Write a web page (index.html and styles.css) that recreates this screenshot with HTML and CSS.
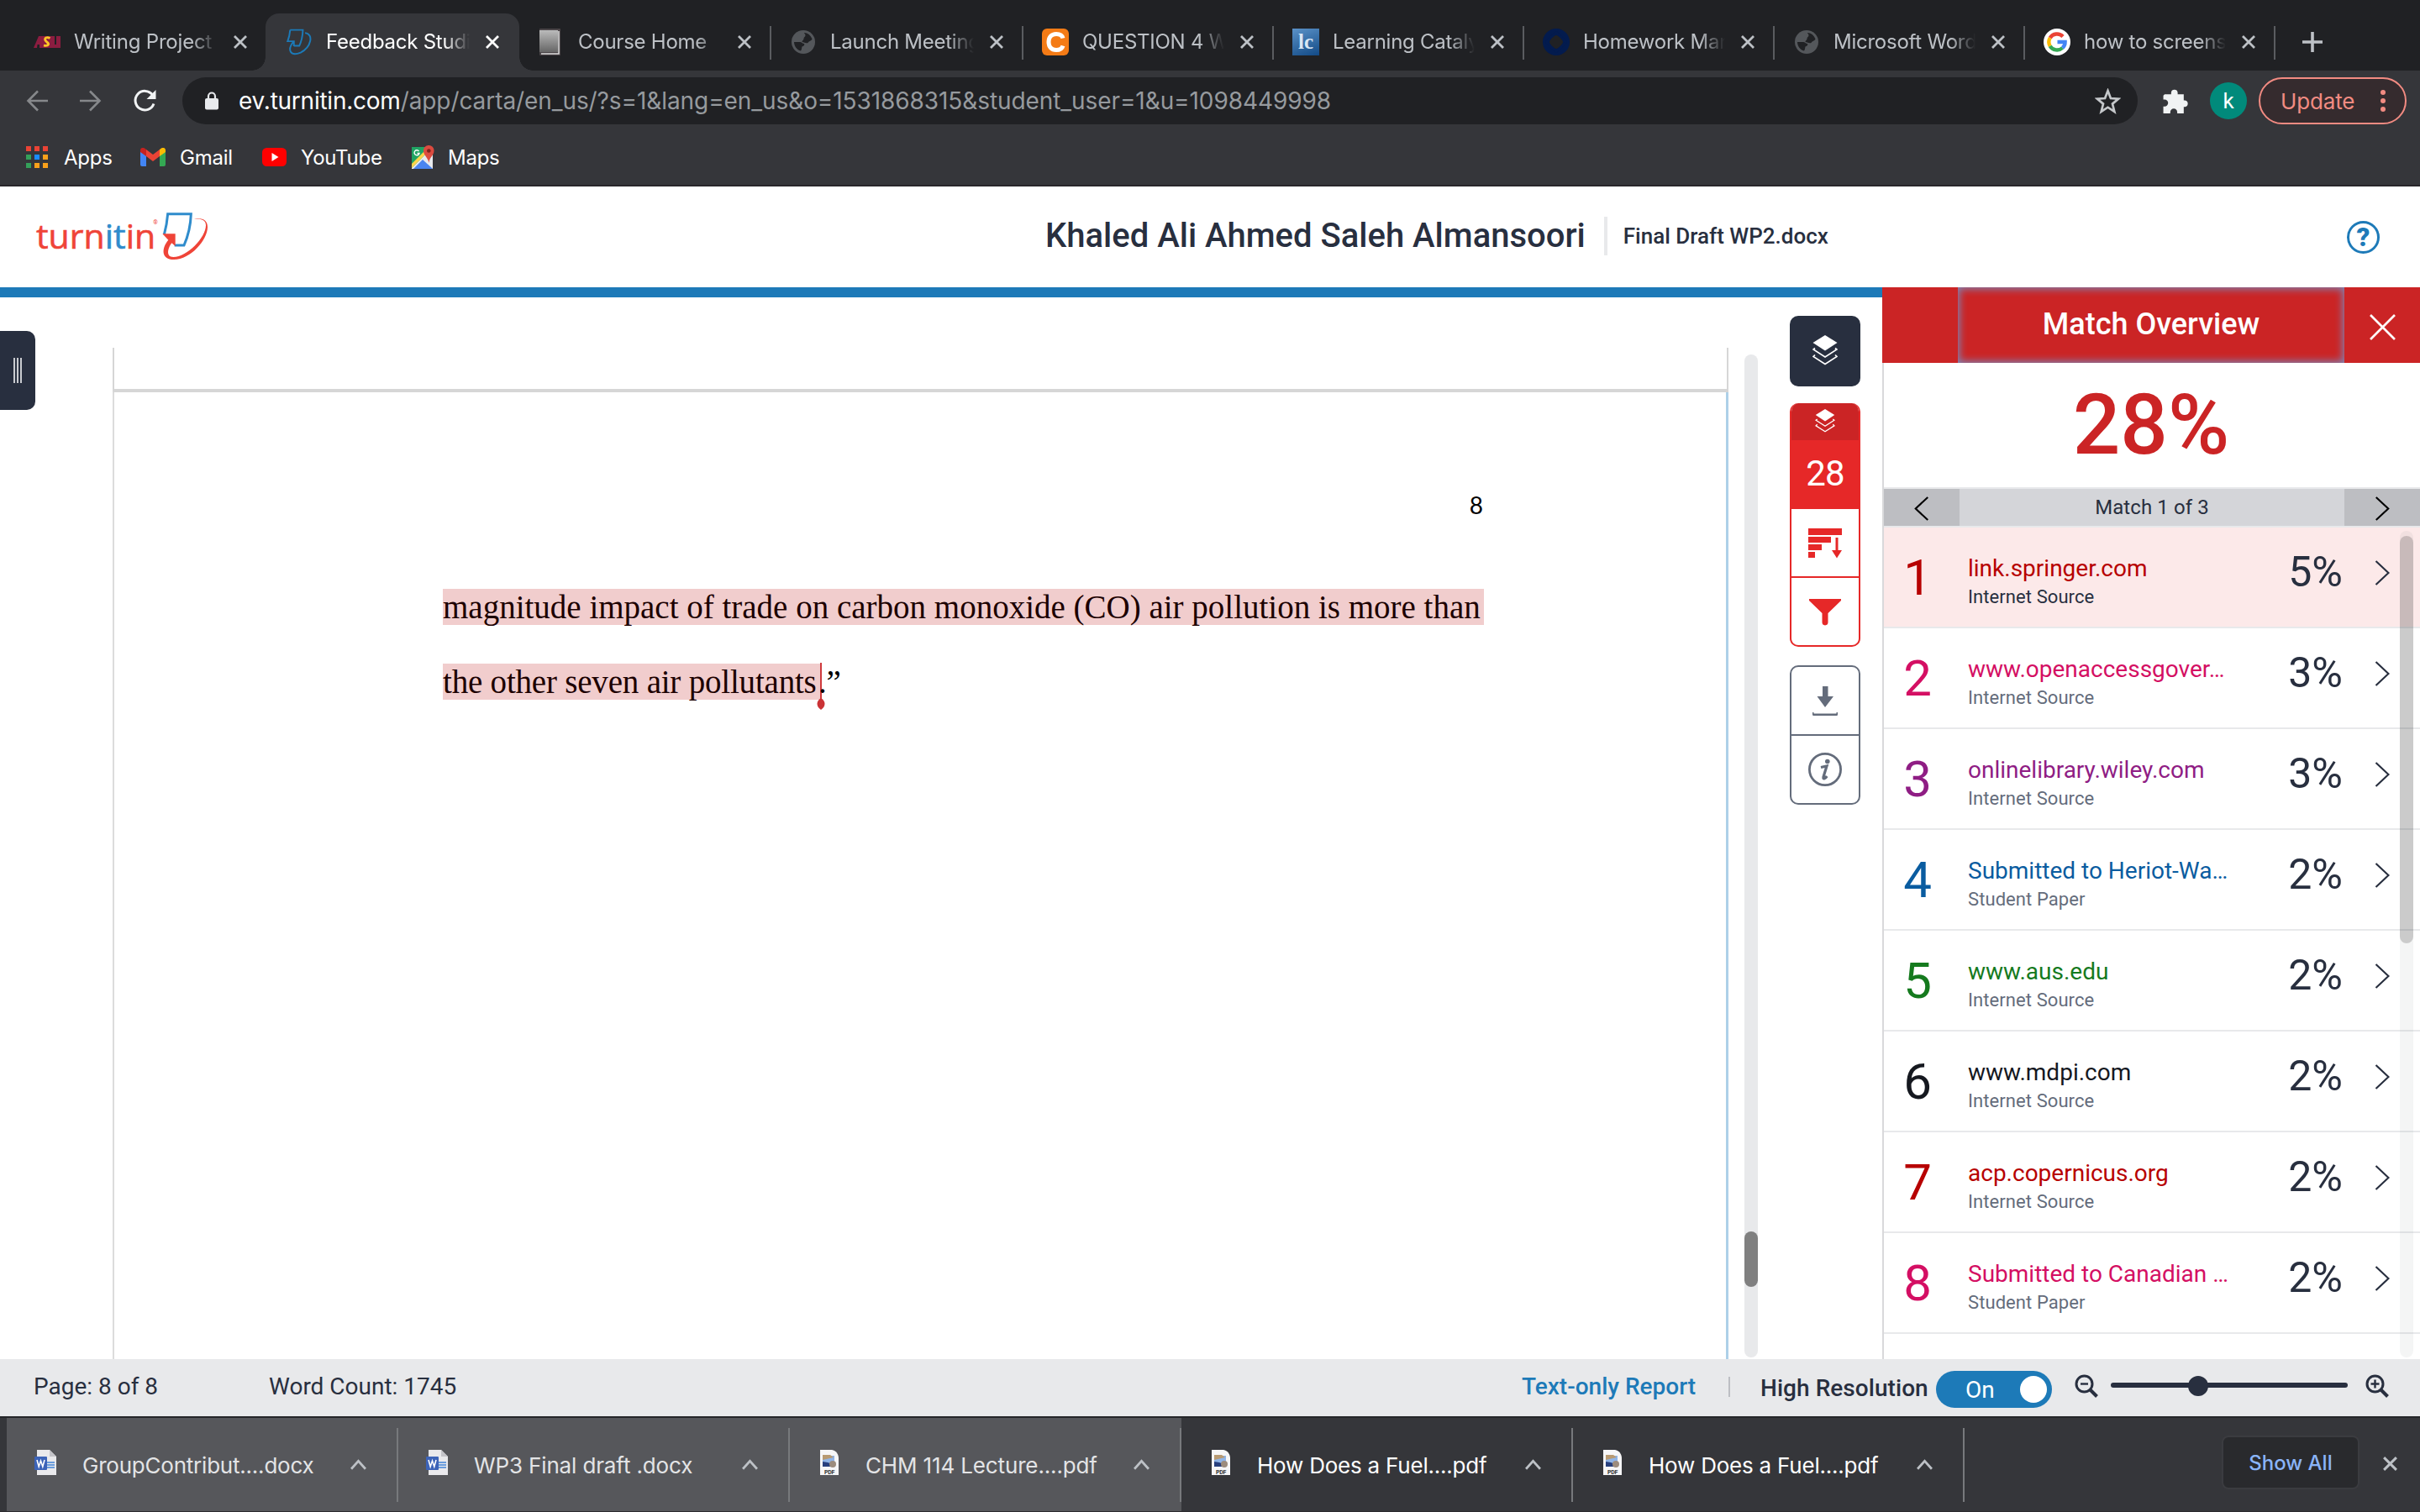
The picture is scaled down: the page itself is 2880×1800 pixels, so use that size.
FILE: index.html
```html
<!DOCTYPE html>
<html lang="en">
<head>
<meta charset="utf-8">
<title>Feedback Studio</title>
<link rel="stylesheet" href="styles.css">
</head>
<body>
<svg class="defs" aria-hidden="true">
  <symbol id="x" viewBox="0 0 18 18"><path d="M2 2L16 16M16 2L2 16" stroke="currentColor" stroke-width="2.8" fill="none"/></symbol>
  <symbol id="globe" viewBox="0 0 28 28"><circle cx="14" cy="14" r="14" fill="#54575b"/><path d="M15 3c4 0 8 3 9.500 7.500-1.500 3-4 2-5 4.500-3 1-4-1-7-1 0-2 2-2 2-4s2-2 2-4-1.500-1.500-1.500-3zM3 14h7c2 0 3 2 5 2 1 2-1 3-2.500 3.500-.5 2-.5 4-1.500 5C6.500 23.500 3 19 3 14z" fill="#202124"/></symbol>
  <symbol id="layers" viewBox="0 0 30 36"><path d="M15 0L29.500 9 15 18.500.5 9z" fill="#fff"/><path d="M3 15.500L1 17l14 9 14-9-2-1.500M3 23.500L1 25.500l14 9 14-9-2-2" fill="none" stroke="#fff" stroke-width="1.700"/></symbol>
  <symbol id="chev" viewBox="0 0 18 30"><path d="M1.500 1L16.500 15 1.500 29" fill="none" stroke="currentColor" stroke-width="2.200"/></symbol>
  <symbol id="up" viewBox="0 0 18 12"><path d="M1 11L9 2l8 9" fill="none" stroke="#bdc1c6" stroke-width="2.600"/></symbol>
  <symbol id="word" viewBox="0 0 28 32"><path d="M4 1h15l8 8v22H4z" fill="#e9e9ec"/><path d="M19 1l8 8h-8z" fill="#c4c4c9"/><path d="M16 16h9M16 19h9M16 22h9" stroke="#3f83d8" stroke-width="1.600"/><rect x="1" y="9" width="15" height="16" rx="1" fill="#3c63b8"/><path d="M4 13l2.200 8L8.500 14l2.300 7L13 13" fill="none" stroke="#fff" stroke-width="1.600"/></symbol>
  <symbol id="pdf" viewBox="0 0 28 32"><path d="M4 1h14c5 1 8 5 8 10v20H4z" fill="#f6f6f7"/><path d="M7 8h14v13H7z" fill="#8fb4e8"/><path d="M7 7h9l4 3-13 3z" fill="#b89a72"/><path d="M7 15l6 1 8 3v2H7z" fill="#273f7d"/><circle cx="19" cy="18" r="4" fill="#9c8c7d"/><text x="15" y="29.500" text-anchor="middle" class="pdf-label">PDF</text></symbol>
</svg>

<header class="tabs">
  <div class="tab wide"><svg class="fav" viewBox="0 0 32 32"><path d="M0 23L6 9h5v14H7v-4H4.500L4 23zM20 9h5v10h2V9h5v14H20z" fill="#8c1d40"/><path d="M9 23V9h12v14z" fill="#8c1d40"/><path d="M19.500 11.500c-4-2-7 0-5.500 2.500s4.500 3 3.500 5-3 1.500-5.500 1" fill="none" stroke="#ffc627" stroke-width="2.800"/></svg><span class="tt">Writing Project 2</span><svg class="tx"><use href="#x"/></svg></div>
  <div class="tab wide active"><svg class="fav" viewBox="480 30 180 190" preserveAspectRatio="none"><path d="M510 40h85q-2 62-24 112h-36M510 40q-3 40-17 80h42v35M610 60c60 10 40 100-30 140-70 30-90-20-50-75" fill="none" stroke="#1c7ab8" stroke-width="11"/></svg><span class="tt">Feedback Studio</span><svg class="tx"><use href="#x"/></svg></div>
  <div class="tab wide"><svg class="fav" viewBox="0 0 32 32"><defs><linearGradient id="g1" x1="0" y1="0" x2="0" y2="1"><stop offset="0" stop-color="#bbb"/><stop offset="1" stop-color="#666"/></linearGradient></defs><rect x="2" width="25" height="32" rx="1" fill="#4b4548"/><rect x="2" y="2" width="22" height="26" fill="url(#g1)"/><path d="M4 30h21V3" fill="none" stroke="#ddd" stroke-width="1.500"/></svg><span class="tt">Course Home</span><svg class="tx"><use href="#x"/></svg></div>
  <div class="tab wide sep"><svg class="fav globe"><use href="#globe"/></svg><span class="tt">Launch Meeting</span><svg class="tx"><use href="#x"/></svg></div>
  <div class="tab sep"><svg class="fav" viewBox="0 0 32 32"><rect width="32" height="32" rx="6" fill="#f47b16"/><path d="M25 11.500c-1-4-4-5-8-5-6 0-9 4-9 9.500s3 9.500 9 9.500c4 0 7-1.500 8-5" fill="none" stroke="#fff" stroke-width="5"/></svg><span class="tt">QUESTION 4 Wh</span><svg class="tx"><use href="#x"/></svg></div>
  <div class="tab sep"><span class="fav lc">lc</span><span class="tt">Learning Catalytics</span><svg class="tx"><use href="#x"/></svg></div>
  <div class="tab sep"><svg class="fav" viewBox="0 0 32 32"><circle cx="16" cy="16" r="12" fill="none" stroke="#031b4e" stroke-width="8"/><path d="M16 5l6 5 5 6-5 6-6 5-6-5-5-6 5-6z" fill="none" stroke="#031b4e" stroke-width="3"/></svg><span class="tt">Homework Manager</span><svg class="tx"><use href="#x"/></svg></div>
  <div class="tab sep"><svg class="fav globe"><use href="#globe"/></svg><span class="tt">Microsoft Word</span><svg class="tx"><use href="#x"/></svg></div>
  <div class="tab sep last"><svg class="fav" viewBox="0 0 32 32"><circle cx="16" cy="16" r="16" fill="#fff"/><g fill="none" stroke-width="4.400"><path d="M23 9.500A9.600 9.600 0 0 0 7.700 11.200" stroke="#ea4335"/><path d="M7.700 11.200a9.600 9.600 0 0 0 0 9.600" stroke="#fbbc05"/><path d="M7.700 20.800A9.600 9.600 0 0 0 22.500 23" stroke="#34a853"/><path d="M22.500 23A9 9 0 0 0 25.600 16H16.500" stroke="#4285f4"/></g></svg><span class="tt">how to screenshot</span><svg class="tx"><use href="#x"/></svg></div>
  <svg class="plus" viewBox="0 0 24 24"><path d="M12 0v24M0 12h24" stroke="#bdc1c6" stroke-width="3.600"/></svg>
</header>

<div class="toolbar">
  <svg class="nav" viewBox="0 0 26 26"><path d="M26 13H3M14 1.500L2.500 13 14 24.500" fill="none" stroke="#86888b" stroke-width="2.600"/></svg>
  <svg class="nav fwd" viewBox="0 0 26 26"><path d="M0 13h23M12 1.500L23.500 13 12 24.500" fill="none" stroke="#86888b" stroke-width="2.600"/></svg>
  <svg class="reload" viewBox="0 0 28 28"><path d="M23.500 7A11.300 11.300 0 1 0 25 17.500" fill="none" stroke="#f1f3f4" stroke-width="3"/><path d="M27.500 1v11h-11z" fill="#f1f3f4"/></svg>
  <div class="omni">
    <svg class="lock" viewBox="0 0 18 22"><path d="M5 9V5.500a4 4 0 0 1 8 0V9" fill="none" stroke="#e8eaed" stroke-width="2.200"/><rect x="1" y="8" width="16" height="13.500" rx="2" fill="#e8eaed"/></svg>
    <span class="host">ev.turnitin.com</span><span class="path">/app/carta/en_us/?s=1&amp;lang=en_us&amp;o=1531868315&amp;student_user=1&amp;u=1098449998</span>
    <svg class="star" viewBox="0 0 30 30"><path d="M15 3l3.300 8.600 9 .6-7 5.800 2.300 9L15 22l-7.600 5 2.300-9-7-5.800 9-.6z" fill="none" stroke="#c4c7ca" stroke-width="2.600"/></svg>
  </div>
  <svg class="puzzle" viewBox="0 0 30 30"><path d="M3 7h7.500V5a3.800 3.800 0 0 1 7.500 0v2h7v7h1.500a3.800 3.800 0 0 1 0 7.500H25V29h-7.500v-1.500a4 4 0 0 0-8 0V29H1.500v-8H3a4 4 0 0 0 0-8H1.500V8.500z" fill="#f1f3f4"/></svg>
  <span class="avatar">k</span>
  <div class="update"><span>Update</span><svg viewBox="0 0 6 28"><g fill="#f28b82"><circle cx="3" cy="4" r="3"/><circle cx="3" cy="14" r="3"/><circle cx="3" cy="24" r="3"/></g></svg></div>
</div>

<nav class="marks">
  <svg class="m-apps" viewBox="0 0 26 26"><path d="M0 0h6v6H0zM10 0h6v6h-6zM20 0h6v6h-6z" fill="#ea4335"/><path d="M0 10h6v6H0z" fill="#34a05a"/><path d="M10 10h6v6h-6z" fill="#1a8cff"/><path d="M20 10h6v6h-6zM10 20h6v6h-6zM20 20h6v6h-6z" fill="#f9a11b"/><path d="M0 20h6v6H0z" fill="#34a05a"/></svg><span class="t1">Apps</span>
  <svg class="m-gmail" viewBox="0 0 30 22"><path d="M0 3v17a2 2 0 0 0 2 2h5V8z" fill="#4285f4"/><path d="M30 3v17a2 2 0 0 1-2 2h-5V8z" fill="#34a853"/><path d="M23 2v8l7-5V3c0-3-3-4-5-2.500z" fill="#fbbc04"/><path d="M7 2v8L0 5V3C0 0 3-1 5 .5z" fill="#c5221f"/><path d="M7 2l8 6 8-6v8l-8 6-8-6z" fill="#ea4335"/></svg><span class="t2">Gmail</span>
  <svg class="m-yt" viewBox="0 0 29 22"><rect width="29" height="22" rx="5.500" fill="#f00"/><path d="M11.500 6l8 5-8 5z" fill="#fff"/></svg><span class="t3">YouTube</span>
  <svg class="m-maps" viewBox="0 0 28 30"><path d="M1 3h25v26H1z" fill="#e8eaed"/><path d="M1 3h17v8L1 28z" fill="#1fa463"/><path d="M18 11L1 28v-5l15-15z" fill="#ffd54b"/><path d="M3 29l11-11 12 11z" fill="#4a84f0"/><path d="M21 1a6 6 0 0 1 6.500 6.500C27.500 13 22 15 21.500 22 20 15 15 13 15 7.500A6 6 0 0 1 21 1z" fill="#dc4b3f"/><circle cx="21.300" cy="7.500" r="2.300" fill="#7d231c"/><path d="M9.500 8A3 3 0 1 0 10 10.500H7.500" fill="none" stroke="#fff" stroke-width="1.400"/></svg><span class="t4">Maps</span>
</nav>

<div class="head">
  <div class="logo"><span class="word">turn<b>it</b>in</span><sup>®</sup>
    <svg viewBox="480 30 180 180"><path d="M496 118q10-36 13-74h83q-2 60-25 112h-34" fill="none" stroke="#2f8ccc" stroke-width="9"/><path d="M490 115h46v44l-13-11c-14 18-22 50 6 50 50 0 116-70 116-113 0-16-10-24-42-24 34-4 48 8 48 30 0 46-60 116-120 116-48 0-44-42-20-70z" fill="#ef4438"/></svg>
  </div>
  <div class="who"><h1>Khaled Ali Ahmed Saleh Almansoori</h1><i></i><h2>Final Draft WP2.docx</h2></div>
  <div class="help">?</div>
</div>

<main>
  <section class="viewer">
    <div class="drawer"><i></i><i></i><i></i></div>
    <div class="sheets">
      <div class="prev"></div>
      <article class="page">
        <div class="num">8</div>
        <p><mark class="l1">magnitude impact of trade on carbon monoxide (CO) air pollution is more than</mark></p>
        <p class="p2"><mark class="l2">the other seven air pollutants<svg class="caret" viewBox="0 0 10 56"><path d="M5 0v46" stroke="#cf3a3d" stroke-width="2"/><path d="M5 42c3 2 4.500 4 4.500 7S7.500 54 5 56C2.500 54 .5 52 .5 49S2 44 5 42z" fill="#cb3336"/></svg></mark><span class="tail">.”</span></p>
      </article>
    </div>
    <div class="vbar"><i></i></div>
    <aside class="rail">
      <div class="dark"><svg><use href="#layers"/></svg></div>
      <div class="red">
        <div class="r0"><svg><use href="#layers"/></svg></div>
        <div class="r1">28</div>
        <div class="r2"><svg viewBox="0 0 40 36"><path d="M0 0h40v8H0zM0 10h27v7H0zM0 19h16v7H0zM0 28h8v7H0zM32.500 11h3v15H40l-6 9.500L28 26h4.500z" fill="#e62828"/></svg></div>
        <div class="r3"><svg viewBox="0 0 40 32"><path d="M1 0h38v2L23.500 17v11q0 3-3.500 3.500-3.500-.5-3.500-3.500V17L1 2z" fill="#e62828"/></svg></div>
      </div>
      <div class="gray">
        <div class="g1"><svg viewBox="0 0 30 36"><path d="M12 0h6.500v12H25L15 25 5.500 12H12zM0 31v3q0 1 1.500 1h27q1.500 0 1.500-1v-3h-1.500v1.500h-27V31z" fill="#646c7b"/></svg></div>
        <div class="g2"><svg viewBox="0 0 40 40"><circle cx="20" cy="20" r="18.600" fill="none" stroke="#646c7b" stroke-width="2.800"/><circle cx="22.800" cy="10.500" r="2.800" fill="#646c7b"/><path d="M15 17.500l7-1.500-4 13q-.5 2.500 1.200 1.700t3-2.700" fill="none" stroke="#646c7b" stroke-width="3.200"/></svg></div>
      </div>
    </aside>
  </section>

  <section class="panel">
    <div class="ptitle"><i></i><h3>Match Overview</h3><div><svg viewBox="0 0 30 30"><path d="M1 1l28 28M29 1L1 29" stroke="#fff" stroke-width="2.600"/></svg></div></div>
    <div class="results">
      <div class="score">28%</div>
      <div class="pager"><div><svg class="flip"><use href="#chev"/></svg></div><span>Match 1 of 3</span><div><svg><use href="#chev"/></svg></div></div>
      <ol>
        <li class="sel red1"><b>1</b><div><h4>link.springer.com</h4><small>Internet Source</small></div><em>5%</em><svg><use href="#chev"/></svg></li>
        <li class="pink"><b>2</b><div><h4>www.openaccessgover…</h4><small>Internet Source</small></div><em>3%</em><svg><use href="#chev"/></svg></li>
        <li class="purple"><b>3</b><div><h4>onlinelibrary.wiley.com</h4><small>Internet Source</small></div><em>3%</em><svg><use href="#chev"/></svg></li>
        <li class="blue"><b>4</b><div><h4>Submitted to Heriot-Wa…</h4><small>Student Paper</small></div><em>2%</em><svg><use href="#chev"/></svg></li>
        <li class="green"><b>5</b><div><h4>www.aus.edu</h4><small>Internet Source</small></div><em>2%</em><svg><use href="#chev"/></svg></li>
        <li class="black"><b>6</b><div><h4>www.mdpi.com</h4><small>Internet Source</small></div><em>2%</em><svg><use href="#chev"/></svg></li>
        <li class="red1"><b>7</b><div><h4>acp.copernicus.org</h4><small>Internet Source</small></div><em>2%</em><svg><use href="#chev"/></svg></li>
        <li class="pink"><b>8</b><div><h4>Submitted to Canadian …</h4><small>Student Paper</small></div><em>2%</em><svg><use href="#chev"/></svg></li>
      </ol>
    </div>
    <div class="pbar"><i></i></div>
  </section>
</main>

<div class="status">
  <span class="s1">Page: 8 of 8</span><span class="s2">Word Count: 1745</span>
  <a>Text-only Report</a><i class="div"></i><strong>High Resolution</strong>
  <div class="toggle"><span>On</span><i></i></div>
  <svg class="zo" viewBox="0 0 28 28"><circle cx="11.500" cy="11.500" r="9.500" fill="none" stroke="#282f3f" stroke-width="3"/><path d="M18 18l8.500 8.500" stroke="#282f3f" stroke-width="4"/><path d="M7 11.500h9" stroke="#282f3f" stroke-width="2.400"/></svg>
  <div class="slider"><i></i></div>
  <svg class="zi" viewBox="0 0 28 28"><circle cx="11.500" cy="11.500" r="9.500" fill="none" stroke="#282f3f" stroke-width="3"/><path d="M18 18l8.500 8.500" stroke="#282f3f" stroke-width="4"/><path d="M6.500 11.500h10M11.500 6.500v10" stroke="#282f3f" stroke-width="2.400"/></svg>
</div>

<footer class="shelf">
  <div class="dl lit"><svg class="doc"><use href="#word"/></svg><span>GroupContribut....docx</span><svg class="up"><use href="#up"/></svg></div>
  <div class="dl lit"><svg class="doc"><use href="#word"/></svg><span class="w">WP3 Final draft .docx</span><svg class="up"><use href="#up"/></svg></div>
  <div class="dl lit"><svg class="doc"><use href="#pdf"/></svg><span class="w">CHM 114 Lecture....pdf</span><svg class="up"><use href="#up"/></svg></div>
  <div class="dl"><svg class="doc"><use href="#pdf"/></svg><span>How Does a Fuel....pdf</span><svg class="up"><use href="#up"/></svg></div>
  <div class="dl"><svg class="doc"><use href="#pdf"/></svg><span>How Does a Fuel....pdf</span><svg class="up"><use href="#up"/></svg></div>
  <button>Show All</button>
  <svg class="sx"><use href="#x"/></svg>
</footer>
</body>
</html>
```
FILE: styles.css
```css
* { box-sizing: border-box; }
body { margin: 0; width: 2880px; height: 1800px; overflow: hidden; background: #fff; font-family: Roboto, sans-serif; color: #282f3f; }
svg { display: block; flex: none; }
i { display: block; }
h1, h2, h3, h4, p, ol { margin: 0; padding: 0; font-weight: 500; }
.defs { position: absolute; width: 0; height: 0; }
.pdf-label { font: 700 7px Roboto, sans-serif; fill: #333; }

/* tab strip */
.tabs { height: 84px; padding: 16px 0 0 16px; background: #202124; display: flex; font-family: Inter, sans-serif; }
.tab { position: relative; width: 298px; height: 68px; padding: 0 21px 0 24px; display: flex; align-items: center; color: #bdc1c6; }
.tab.wide { width: 300px; }
.tab.active { width: 302px; padding-right: 23px; margin-right: -2px; background: #35363a; border-radius: 16px 16px 0 0; color: #fff; }
.tab.active::before, .tab.active::after { content: ""; position: absolute; bottom: 0; width: 16px; height: 16px; }
.tab.active::before { left: -16px; background: radial-gradient(circle at 0 0, transparent 15.5px, #35363a 16px); }
.tab.active::after { right: -16px; background: radial-gradient(circle at 100% 0, transparent 15.5px, #35363a 16px); }
.sep::before, .last::after { content: ""; position: absolute; left: 0; top: 15px; width: 2px; height: 40px; background: #5a5c60; }
.last::after { left: auto; right: -2px; }
.fav { width: 32px; height: 32px; flex: none; }
.fav.globe { width: 28px; height: 28px; margin: 0 2px; }
.lc { background: linear-gradient(160deg, #5b92c8, #124a86); color: #d8e6f4; font: 700 25px/32px "Liberation Serif", serif; text-align: center; }
.tt { flex: 1; margin: 0 18px 0 16px; font-size: 24px; letter-spacing: -.25px; line-height: 32px; white-space: nowrap; overflow: hidden; -webkit-mask-image: linear-gradient(90deg, #000 82%, transparent 100%); mask-image: linear-gradient(90deg, #000 82%, transparent 100%); }
.tab:nth-child(1) .tt { letter-spacing: -.2px; }
.tx { width: 18px; height: 18px; }
.plus { width: 24px; height: 24px; margin: 22px 0 0 34px; }

/* toolbar */
.toolbar { height: 72px; background: #35363a; display: flex; align-items: center; padding-left: 31px; font-family: Inter, sans-serif; }
.nav { width: 26px; height: 26px; }
.fwd { margin-left: 38px; }
.reload { width: 28px; height: 28px; margin-left: 37px; }
.omni { width: 2327px; height: 56px; margin-left: 31px; padding: 0 20px 0 26px; border-radius: 28px; background: #202124; display: flex; align-items: center; font-size: 28px; white-space: nowrap; color: #fff; }
.lock { width: 18px; height: 22px; margin-right: 23px; }
.host { letter-spacing: -.24px; }
.path { color: #969a9e; letter-spacing: -.08px; }
.star { width: 31px; height: 31px; margin-left: auto; }
.puzzle { width: 31px; height: 31px; margin-left: 29px; }
.avatar { width: 44px; height: 44px; margin: 0 14px 0 26px; border-radius: 50%; background: #018a7b; color: #fff; font: 26px/44px Roboto, sans-serif; text-align: center; }
.update { width: 176px; height: 56px; border: 2px solid #f28b82; border-radius: 28px; background: #352b2e; color: #f28b82; display: flex; align-items: center; padding-left: 24px; font-size: 26px; letter-spacing: -.15px; }
.update svg { width: 6px; height: 28px; margin-left: 31px; }

/* bookmarks */
.marks { height: 66px; background: #35363a; border-bottom: 2px solid #28262a; display: flex; align-items: center; padding: 0 0 2px 31px; color: #fff; font: 24px Inter, sans-serif; letter-spacing: -.25px; }
.marks span { margin-left: 19px; }
.m-apps { width: 26px; height: 26px; }
.m-gmail { width: 30px; height: 22px; margin-left: 33px; }
.m-yt { width: 29px; height: 22px; margin-left: 33px; }
.m-maps { width: 28px; height: 30px; margin-left: 34px; }
.marks .t1 { width: 58px; }
.marks .t2 { margin-left: 17px; width: 65px; }
.marks .t3 { margin-left: 17px; width: 97px; }
.marks .t4 { margin-left: 16px; }

/* document header */
.head { height: 120px; display: grid; grid-template-columns: 1244px 1fr 87px; align-items: center; }
.logo { display: flex; align-items: center; padding: 0 0 5px 43px; height: 120px; }
.word { font: 500 41px/60px "Open Sans", sans-serif; color: #ef4438; -webkit-text-stroke: .6px currentColor; }
.word b { font-weight: inherit; color: #2f8ccc; }
.logo sup { font: 7px/10px Roboto, sans-serif; color: #ef4438; margin: -30px 0 0 -3px; }
.logo svg { width: 60px; height: 60px; margin-left: 2px; }
.who { display: flex; align-items: center; white-space: nowrap; margin-top: -3px; }
.who h1 { font-size: 40px; line-height: 48px; }
.who i { width: 4px; height: 46px; background: #e8e9eb; margin: 1px 19px 0 22px; }
.who h2 { font-size: 26px; line-height: 32px; margin-top: 1px; }
.help { width: 39px; height: 39px; border: 3px solid #1d7ab8; border-radius: 50%; color: #1d7ab8; font: 900 31px/34px Roboto, sans-serif; text-align: center; margin-top: 1px; }

/* viewer */
main { height: 1276px; display: flex; }
.viewer { width: 2240px; border-top: 12px solid #1d7ab8; display: flex; align-items: flex-start; }
.drawer { width: 42px; height: 94px; margin-top: 40px; border-radius: 0 10px 10px 0; background: #282f3f; display: flex; gap: 2px; padding: 32px 0 0 16px; }
.drawer i { width: 2px; height: 30px; background: #c9cbd0; }
.sheets { width: 1923px; height: 1204px; margin: 60px 0 0 92px; display: flex; flex-direction: column; }
.prev { height: 53px; border: solid #d6d6d6; border-width: 0 2px 4px 2px; }
.page { flex: 1; border-left: 2px solid #dcdcdc; border-right: 3px solid #add0e8; padding: 120px 0 0 391px; font: 39px/43px "Liberation Serif", serif; color: #000; white-space: nowrap; }
.num { width: 1238px; height: 114px; text-align: right; font: 28px/28px Lato, sans-serif; }
.page mark { display: inline-block; height: 43px; background: #f1cdcd; color: #1c0000; }
.l1 { width: 1239px; }
.p2 { margin-top: 46px; letter-spacing: -.2px; }
.page p { height: 43px; }
.l2 { position: relative; width: 450px; }
.tail { margin-left: -3px; position: relative; }
.caret { position: absolute; right: -5px; top: -1px; width: 10px; height: 56px; }
.vbar { width: 16px; height: 1194px; margin: 68px 0 0 19px; border-radius: 8px; background: #e8e9eb; padding-top: 1044px; }
.vbar i { height: 66px; border-radius: 8px; background: #808080; }

/* tool rail */
.rail { width: 84px; margin: 22px 0 0 38px; }
.rail div { display: flex; align-items: center; justify-content: center; }
.rail .dark { height: 84px; border-radius: 10px; background: #282f3f; }
.dark svg { width: 30px; height: 36px; margin-top: -3px; }
.rail .red, .rail .gray { flex-direction: column; align-items: stretch; border-radius: 10px; overflow: hidden; border: 2px solid #e62828; }
.rail .red { height: 290px; margin-top: 20px; background: #fff; border-top: 0; }
.red .r0 { height: 44px; background: #cb2425; margin: 0 -2px; }
.r0 svg { width: 24px; height: 28px; margin-top: -3px; }
.red .r1 { height: 82px; background: #e62828; color: #fff; font-size: 42px; letter-spacing: -.8px; margin: 0 -2px; padding-bottom: 3px; }
.red .r2 { height: 82px; border-bottom: 2px solid #e62828; }
.r2 svg { width: 40px; height: 36px; margin-top: 2px; }
.red .r3 { height: 80px; }
.r3 svg { width: 40px; height: 32px; margin-top: 1px; }
.rail .gray { height: 166px; margin-top: 22px; border-color: #646c7b; }
.gray .g1 { height: 82px; border-bottom: 2px solid #646c7b; }
.g1 svg { width: 30px; height: 36px; margin-top: 2px; }
.gray .g2 { height: 80px; }
.g2 svg { width: 40px; height: 40px; }

/* match panel */
.panel { position: relative; width: 640px; height: 1276px; overflow: hidden; }
.ptitle { height: 90px; display: grid; grid-template-columns: 90px 460px 90px; background: #cb2425; color: #fff; }
.ptitle h3 { font-size: 36px; line-height: 88px; text-align: center; box-shadow: inset 0 0 10px 2px #7d86b6; }
.ptitle div { display: flex; align-items: center; justify-content: center; }
.ptitle svg { width: 31px; height: 31px; margin-top: 4px; }
.results { height: 1186px; border-left: 2px solid #d9d9db; }
.score { height: 148px; font-weight: 500; font-size: 99.5px; line-height: 148px; text-align: center; color: #cb2425; padding-right: 2px; }
.pager { height: 48px; border: solid #e8e9eb; border-width: 2px 0; display: grid; grid-template-columns: 90px 1fr 90px; background: #bdbec2; color: #000; }
.pager span { background: #d4d5d9; color: #282f3f; font-size: 24px; line-height: 44px; text-align: center; letter-spacing: .1px; }
.pager div { display: flex; align-items: center; justify-content: center; }
.pager svg { width: 18px; height: 29px; margin-top: 2px; }
.pager .flip { transform: scaleX(-1); }
ol { list-style: none; }
li { height: 120px; border-bottom: 2px solid #e8e9eb; display: grid; grid-template-columns: 80px 20px 1fr 87px 92px; align-items: start; white-space: nowrap; font-weight: 400; }
li.sel { background: #fce9e9; }
li b { font-weight: 400; font-size: 60px; line-height: 119px; text-align: center; }
li div { grid-column: 3; padding-top: 32px; font-size: 28px; line-height: 34px; }
li h4 { font-weight: 400; font-size: 28px; line-height: 34px; }
li small { display: block; font-size: 22px; line-height: 34px; color: #646c7b; letter-spacing: .08px; }
li.sel small { color: #282f3f; }
li em { font-style: normal; font-size: 50px; line-height: 107px; text-align: right; color: #282f3f; }
li svg { width: 18px; height: 30px; margin: 39px 0 0 38px; color: #282f3f; }
.red1 { color: #b70000; }
.pink { color: #d40f63; }
.purple { color: #8f1d84; }
.blue { color: #0a5ca0; }
.green { color: #157a1e; }
.black { color: #15181f; }
.pbar { position: absolute; right: 8px; top: 290px; width: 16px; height: 984px; border-radius: 8px; background: rgba(40, 60, 60, .05); padding-top: 6px; }
.pbar i { height: 485px; border-radius: 8px; background: #000; opacity: .17; }

/* status bar */
.status { height: 70px; background: #e8e9eb; border-bottom: 2px solid #242528; display: flex; align-items: center; padding: 0 0 3px 40px; font-size: 28px; white-space: nowrap; }
.s1 { width: 280px; }
.s2 { width: 1491px; }
.status a { color: #1d7ab8; font-weight: 500; width: 246px; }
.status .div { width: 2px; height: 24px; background: #bcbec3; margin-right: 36px; }
.status strong { font-weight: 500; width: 209px; margin-top: 4px; letter-spacing: .05px; }
.toggle { width: 138px; height: 44px; border-radius: 22px; background: #1d7ab8; display: flex; align-items: center; justify-content: space-between; padding: 0 6px 0 35px; color: #fff; margin-top: 7px; }
.toggle i { width: 32px; height: 32px; border-radius: 50%; background: #fff; }
.zo, .zi { width: 28px; height: 28px; margin: -2px 15px 0 27px; }
.slider { width: 282px; height: 6px; border-radius: 3px; background: #282f3f; margin-top: -3px; padding-left: 92px; }
.slider i { width: 24px; height: 24px; margin-top: -8px; border-radius: 50%; background: #282f3f; }
.zi { margin: -2px 0 0 21px; }

/* download shelf */
.shelf { height: 112px; background: #35363a; display: flex; align-items: center; padding-left: 8px; color: #fff; font: 26px Inter, sans-serif; border-bottom: 1px solid #2c2a2e; }
.dl { position: relative; width: 466px; height: 111px; padding: 0 38px 0 32px; display: flex; align-items: center; letter-spacing: -.22px; }
.dl::after { content: ""; position: absolute; right: 0; top: 12px; width: 2px; height: 88px; background: #77797c; }
.dl span { margin-left: 30px; padding-top: 1px; white-space: nowrap; }
.dl .w { letter-spacing: -.14px; }
.dl .up { width: 19px; height: 13px; margin-left: auto; }
.lit { background: #56575b; color: #e3e4e6; }
.doc { width: 28px; height: 32px; margin-top: -5px; }
.shelf button { width: 164px; height: 64px; margin: -5px 27px 0 306px; padding: 0; border: 2px solid #3b3c40; border-radius: 8px; background: #292a2d; color: #8ab4f8; font: 500 24px Inter, sans-serif; }
.sx { width: 19px; height: 19px; color: #bdc1c6; margin-top: -3px; }
```
